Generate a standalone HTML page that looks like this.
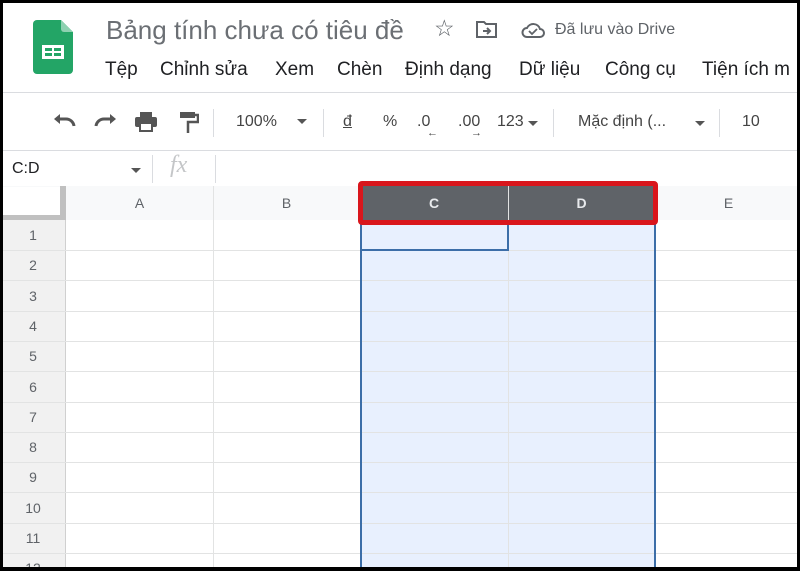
<!DOCTYPE html>
<html><head><meta charset="utf-8"><style>
*{margin:0;padding:0;box-sizing:border-box}
body{width:800px;height:571px;overflow:hidden;background:#000;font-family:"Liberation Sans",Arial,sans-serif;position:relative}
#app{position:absolute;left:3px;top:3px;width:794px;height:564px;background:#fff;overflow:hidden}
.a{position:absolute;white-space:nowrap}
.menu{color:#202124;font-size:19px;top:56px}
.tb{color:#444;font-size:16px;top:110px}
.vl{position:absolute;width:1px;background:#dadce0}
.hl{position:absolute;height:1px;background:#e2e3e3}
.rn{position:absolute;left:0;width:60px;text-align:center;color:#5f6368;font-size:14px}
.ch{position:absolute;top:183px;height:34px;line-height:34px;text-align:center;font-size:14px;color:#5f6368}
</style></head><body>
<div id="app">
<svg class="a" style="left:30px;top:17px" width="40" height="54" viewBox="0 0 40 54">
<path d="M4 0h24l12 12v38a4 4 0 0 1-4 4H4a4 4 0 0 1-4-4V4a4 4 0 0 1 4-4z" fill="#23a566"/>
<path d="M28 0l12 12H31a3 3 0 0 1-3-3z" fill="#8ed1b1"/>
<rect x="9" y="25" width="22" height="14" fill="#fff"/>
<rect x="12" y="28" width="7" height="3" fill="#23a566"/><rect x="21" y="28" width="7" height="3" fill="#23a566"/>
<rect x="12" y="33" width="7" height="3" fill="#23a566"/><rect x="21" y="33" width="7" height="3" fill="#23a566"/>
</svg>
<div class="a" style="left:103px;top:12px;font-size:26px;color:#6b6f74">Bảng tính chưa có tiêu đề</div>
<div class="a" style="left:431px;top:12px;font-size:23px;color:#5f6368">☆</div>
<svg class="a" style="left:473px;top:17px" width="22" height="18" viewBox="0 0 22 18"><path d="M1 2h7l2 2h10v13H1z" fill="none" stroke="#5f6368" stroke-width="2"/><path d="M7 11h7M11 8l3 3-3 3" fill="none" stroke="#5f6368" stroke-width="2"/></svg>
<svg class="a" style="left:518px;top:18px" width="24" height="17" viewBox="0 0 24 17"><path d="M6 16h13a4 4 0 0 0 0-8 7 7 0 0 0-13-1 4.5 4.5 0 0 0 0 9z" fill="none" stroke="#5f6368" stroke-width="2"/><path d="M8 10l3 3 5-5" fill="none" stroke="#5f6368" stroke-width="1.8"/></svg>
<div class="a" style="left:552px;top:18px;font-size:16px;color:#5f6368">Đã lưu vào Drive</div>
<div class="a menu" style="left:102px">Tệp</div>
<div class="a menu" style="left:157px">Chỉnh sửa</div>
<div class="a menu" style="left:272px">Xem</div>
<div class="a menu" style="left:334px">Chèn</div>
<div class="a menu" style="left:402px">Định dạng</div>
<div class="a menu" style="left:516px">Dữ liệu</div>
<div class="a menu" style="left:602px">Công cụ</div>
<div class="a menu" style="left:699px">Tiện ích m</div>
<div class="a" style="left:0;top:89px;width:794px;height:1px;background:#dadce0"></div>
<svg class="a" style="left:50px;top:110px" width="24" height="16" viewBox="0 0 24 16"><path d="M4 6h9a8 8 0 0 1 8 7" fill="none" stroke="#555" stroke-width="3"/><path d="M1 6l6-5v10z" fill="#555"/></svg>
<svg class="a" style="left:90px;top:110px" width="24" height="16" viewBox="0 0 24 16"><path d="M20 6h-9a8 8 0 0 0-8 7" fill="none" stroke="#555" stroke-width="3"/><path d="M23 6l-6-5v10z" fill="#555"/></svg>
<svg class="a" style="left:131px;top:108px" width="24" height="22" viewBox="0 0 24 22"><rect x="6" y="1" width="12" height="5" fill="#555"/><rect x="1" y="6" width="22" height="10" rx="2" fill="#555"/><rect x="6" y="12" width="12" height="8" fill="#fff" stroke="#555" stroke-width="2"/></svg>
<svg class="a" style="left:176px;top:108px" width="20" height="24" viewBox="0 0 20 24"><rect x="1" y="1" width="15" height="6" fill="#555"/><path d="M16 4h3v7H9v11" fill="none" stroke="#555" stroke-width="2.5"/></svg>
<div class="vl" style="left:210px;top:106px;height:28px"></div>
<div class="a tb" style="left:233px">100%</div>
<div class="a" style="left:294px;top:116px;width:0;height:0;border-left:5px solid transparent;border-right:5px solid transparent;border-top:5px solid #555"></div>
<div class="vl" style="left:320px;top:106px;height:28px"></div>
<div class="a tb" style="left:340px;text-decoration:underline">đ</div>
<div class="a tb" style="left:380px">%</div>
<div class="a tb" style="left:414px">.0</div>
<div class="a" style="left:424px;top:124px;font-size:11px;color:#444">←</div>
<div class="a tb" style="left:455px">.00</div>
<div class="a" style="left:468px;top:124px;font-size:11px;color:#444">→</div>
<div class="a tb" style="left:494px">123</div>
<div class="a" style="left:525px;top:118px;width:0;height:0;border-left:5px solid transparent;border-right:5px solid transparent;border-top:5px solid #555"></div>
<div class="vl" style="left:550px;top:106px;height:28px"></div>
<div class="a tb" style="left:575px">Mặc định (...</div>
<div class="a" style="left:692px;top:118px;width:0;height:0;border-left:5px solid transparent;border-right:5px solid transparent;border-top:5px solid #555"></div>
<div class="vl" style="left:716px;top:106px;height:28px"></div>
<div class="a tb" style="left:739px">10</div>
<div class="a" style="left:0;top:147px;width:794px;height:1px;background:#dadce0"></div>
<div class="a" style="left:9px;top:157px;font-size:16px;color:#202124">C:D</div>
<div class="a" style="left:128px;top:165px;width:0;height:0;border-left:5px solid transparent;border-right:5px solid transparent;border-top:5px solid #555"></div>
<div class="vl" style="left:149px;top:152px;height:28px"></div>
<div class="a" style="left:167px;top:149px;font-size:24px;font-style:italic;font-family:'Liberation Serif',serif;color:#c4c6c8">fx</div>
<div class="vl" style="left:212px;top:152px;height:28px"></div>
<div class="a" style="left:0;top:183px;width:794px;height:1px;background:#dadce0"></div>
<div class="a" style="left:0;top:183px;width:794px;height:34px;background:#f8f9fa"></div>
<div class="a" style="left:0;top:184px;width:57px;height:29px;background:#fff"></div>
<div class="a" style="left:57px;top:183px;width:6px;height:34px;background:#c0c0c0"></div>
<div class="a" style="left:0;top:212px;width:63px;height:5px;background:#c0c0c0"></div>
<div class="a" style="left:357px;top:183px;width:295px;height:34px;background:#5f6368"></div>
<div class="ch" style="left:63px;width:147px">A</div>
<div class="ch" style="left:210px;width:147px">B</div>
<div class="ch" style="left:357px;width:148px;color:#e8eaed;font-weight:bold">C</div>
<div class="ch" style="left:505px;width:147px;color:#e8eaed;font-weight:bold">D</div>
<div class="ch" style="left:652px;width:147px">E</div>
<div class="a" style="left:505px;top:183px;width:1px;height:34px;background:#9a9da1"></div>
<div class="a" style="left:0;top:217px;width:63px;height:350px;background:#f1f1f1"></div>
<div class="a" style="left:62px;top:217px;width:1px;height:350px;background:#d0d0d0"></div>
<div class="a" style="left:357px;top:217px;width:295px;height:350px;background:#e8f0fe"></div>
<div id="grid"></div>
<div class="a" style="left:357px;top:217px;width:2px;height:350px;background:#3c6ea8"></div>
<div class="a" style="left:651px;top:217px;width:2px;height:350px;background:#3c6ea8"></div>
<div class="a" style="left:357px;top:217px;width:149px;height:31px;border:2px solid #3c6ea8;border-top:none"></div>
<div class="a" style="left:355px;top:178px;width:300px;height:44px;border:5px solid #d9161c;border-radius:4px"></div>
</div>
<script>
var g=document.getElementById('grid'),h='';
[210,357,505,652].forEach(function(x){h+='<div class="vl" style="left:'+x+'px;top:183px;height:384px;background:#e2e3e3"></div>';});
for(var i=0;i<12;i++){var y=217+i*30.3;
h+='<div class="hl" style="left:0;top:'+Math.round(y+30)+'px;width:794px"></div>';
h+='<div class="rn" style="top:'+Math.round(y+7)+'px">'+(i+1)+'</div>';}
g.innerHTML=h;
</script>
</body></html>
